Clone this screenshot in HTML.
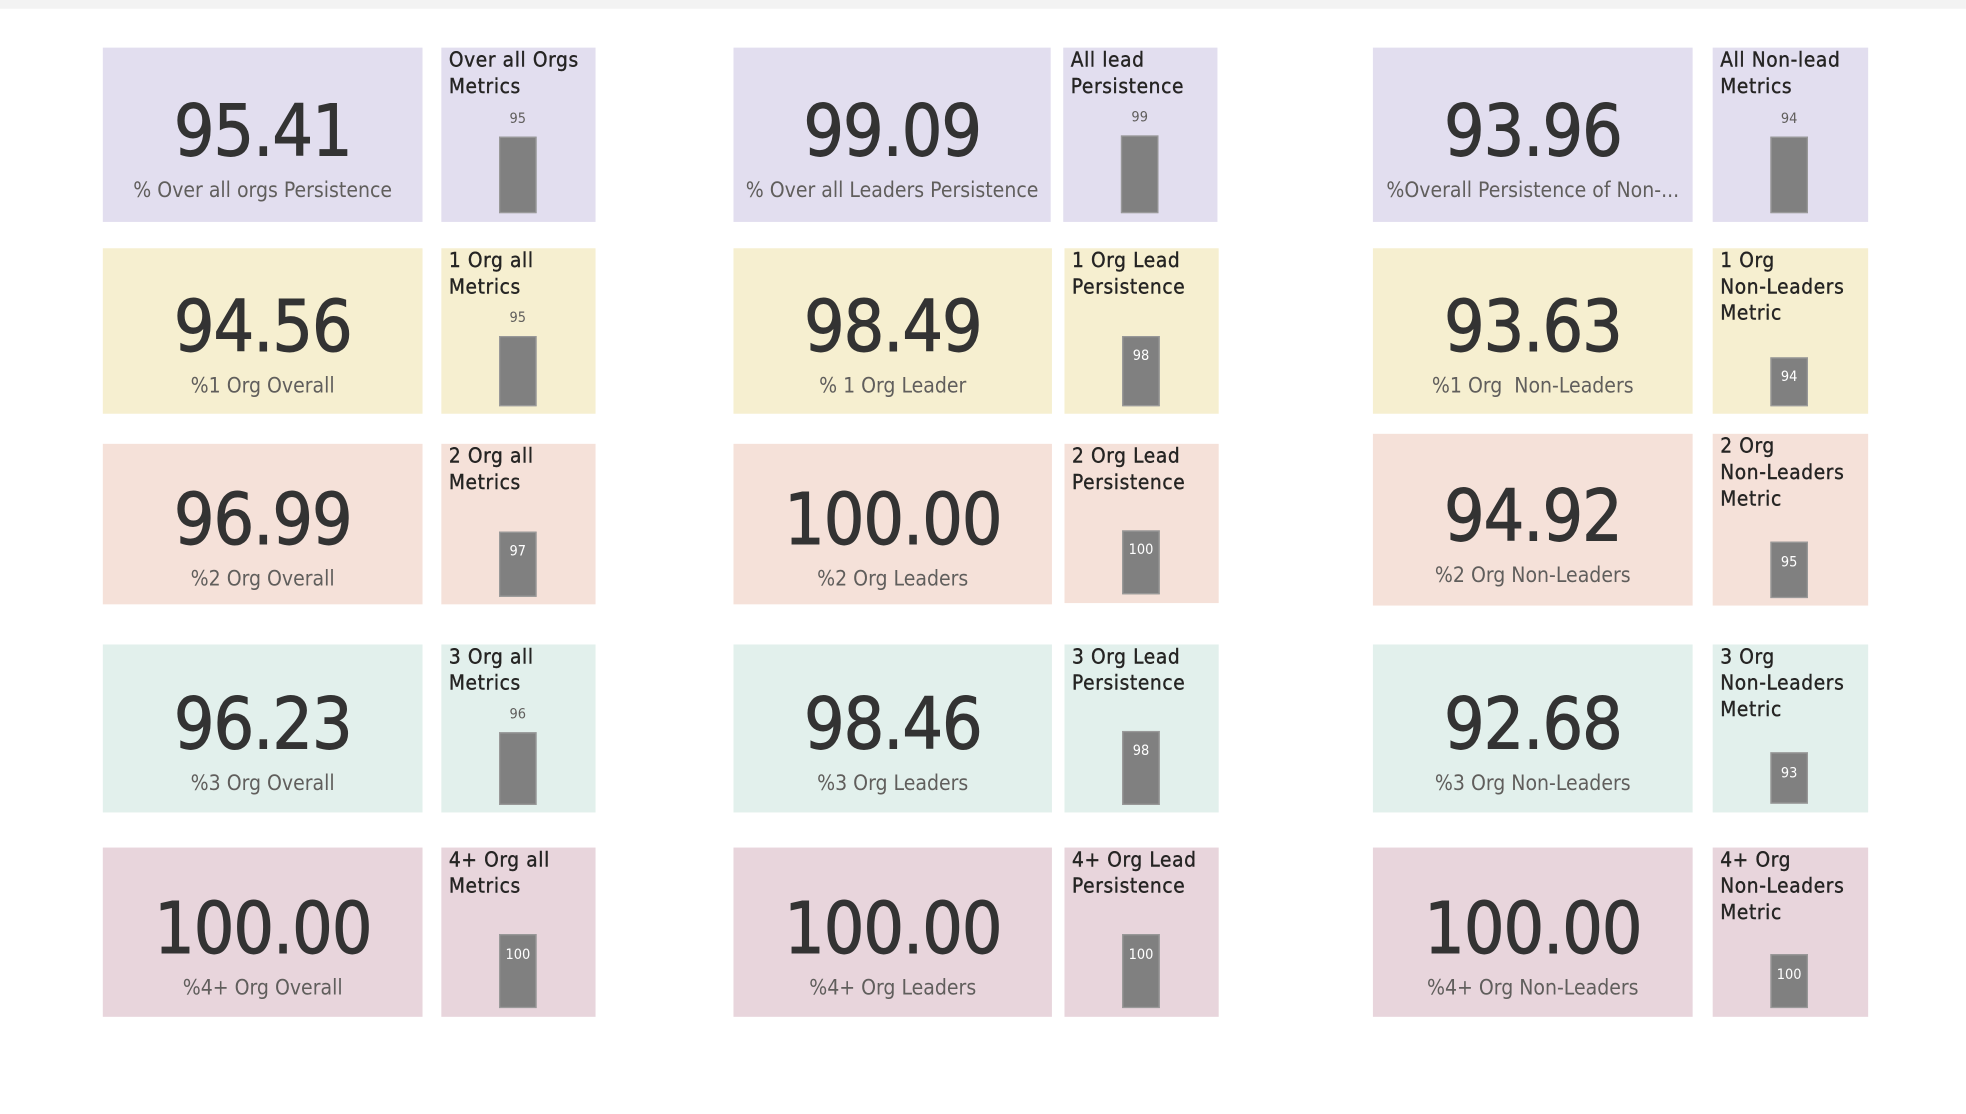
<!DOCTYPE html>
<html><head><meta charset="utf-8"><style>
html,body{margin:0;padding:0;background:#fff;overflow:hidden}
body{width:1966px;height:1114px;position:relative}
#w{position:absolute;left:0;top:0;width:1568px;height:889px;transform:scale(1.2538);transform-origin:0 0}
.top{position:absolute;left:0;top:0;width:1568px;height:7px;background:#f3f3f3}
.b,.m{position:absolute}
.n{position:absolute;left:0;right:0;top:calc(50% - 38px);height:70px;line-height:70px;text-align:center;font-family:"DejaVu Sans Condensed","DejaVu Sans",sans-serif;font-stretch:condensed;font-size:57px;color:#333;letter-spacing:-1px;-webkit-text-stroke:0.7px #333}
.l{position:absolute;left:0;right:0;top:calc(50% + 31px);height:24px;line-height:24px;text-align:center;font-family:"DejaVu Sans Condensed","DejaVu Sans",sans-serif;font-stretch:condensed;font-size:16.8px;color:#605e5c;white-space:nowrap}
.t{position:absolute;left:6px;top:-1px;font-family:"DejaVu Sans Condensed","DejaVu Sans",sans-serif;font-stretch:condensed;font-size:16.5px;line-height:21px;color:#252423;white-space:nowrap;letter-spacing:0.5px;-webkit-text-stroke:0.3px #252423}
.bar{position:absolute;width:30px;background:#808080;border:1px solid #999;box-sizing:border-box}
.bl{position:absolute;width:30px;text-align:center;font-family:"DejaVu Sans Condensed","DejaVu Sans",sans-serif;font-size:11.5px;color:#605e5c;line-height:14px}
.in{color:#fff}
.p{background:#e2deef}.y{background:#f6efd0}.k{background:#f5e1d9}.g{background:#e2f0ec}.r{background:#e8d5dc}
</style></head><body><div id="w">
<div class="top"></div>

<div class="b p" style="left:82px;top:38px;width:255px;height:139px"><div class="n">95.41</div><div class="l">% Over all orgs Persistence</div></div>
<div class="m p" style="left:352px;top:38px;width:123px;height:139px"><div class="t">Over all Orgs<br>Metrics</div></div>
<div class="b p" style="left:585px;top:38px;width:253px;height:139px"><div class="n">99.09</div><div class="l">% Over all Leaders Persistence</div></div>
<div class="m p" style="left:848px;top:38px;width:123px;height:139px"><div class="t">All lead<br>Persistence</div></div>
<div class="b p" style="left:1095px;top:38px;width:255px;height:139px"><div class="n">93.96</div><div class="l">%Overall Persistence of Non-...</div></div>
<div class="m p" style="left:1366px;top:38px;width:124px;height:139px"><div class="t">All Non-lead<br>Metrics</div></div>

<div class="b y" style="left:82px;top:198px;width:255px;height:132px"><div class="n">94.56</div><div class="l">%1 Org Overall</div></div>
<div class="m y" style="left:352px;top:198px;width:123px;height:132px"><div class="t">1 Org all<br>Metrics</div></div>
<div class="b y" style="left:585px;top:198px;width:254px;height:132px"><div class="n">98.49</div><div class="l">% 1 Org Leader</div></div>
<div class="m y" style="left:849px;top:198px;width:123px;height:132px"><div class="t">1 Org Lead<br>Persistence</div></div>
<div class="b y" style="left:1095px;top:198px;width:255px;height:132px"><div class="n">93.63</div><div class="l">%1 Org &nbsp;Non-Leaders</div></div>
<div class="m y" style="left:1366px;top:198px;width:124px;height:132px"><div class="t">1 Org<br>Non-Leaders<br>Metric</div></div>

<div class="b k" style="left:82px;top:354px;width:255px;height:128px"><div class="n">96.99</div><div class="l">%2 Org Overall</div></div>
<div class="m k" style="left:352px;top:354px;width:123px;height:128px"><div class="t">2 Org all<br>Metrics</div></div>
<div class="b k" style="left:585px;top:354px;width:254px;height:128px"><div class="n">100.00</div><div class="l">%2 Org Leaders</div></div>
<div class="m k" style="left:849px;top:354px;width:123px;height:127px"><div class="t">2 Org Lead<br>Persistence</div></div>
<div class="b k" style="left:1095px;top:346px;width:255px;height:137px"><div class="n">94.92</div><div class="l">%2 Org Non-Leaders</div></div>
<div class="m k" style="left:1366px;top:346px;width:124px;height:137px"><div class="t">2 Org<br>Non-Leaders<br>Metric</div></div>

<div class="b g" style="left:82px;top:514px;width:255px;height:134px"><div class="n">96.23</div><div class="l">%3 Org Overall</div></div>
<div class="m g" style="left:352px;top:514px;width:123px;height:134px"><div class="t">3 Org all<br>Metrics</div></div>
<div class="b g" style="left:585px;top:514px;width:254px;height:134px"><div class="n">98.46</div><div class="l">%3 Org Leaders</div></div>
<div class="m g" style="left:849px;top:514px;width:123px;height:134px"><div class="t">3 Org Lead<br>Persistence</div></div>
<div class="b g" style="left:1095px;top:514px;width:255px;height:134px"><div class="n">92.68</div><div class="l">%3 Org Non-Leaders</div></div>
<div class="m g" style="left:1366px;top:514px;width:124px;height:134px"><div class="t">3 Org<br>Non-Leaders<br>Metric</div></div>

<div class="b r" style="left:82px;top:676px;width:255px;height:135px"><div class="n">100.00</div><div class="l">%4+ Org Overall</div></div>
<div class="m r" style="left:352px;top:676px;width:123px;height:135px"><div class="t">4+ Org all<br>Metrics</div></div>
<div class="b r" style="left:585px;top:676px;width:254px;height:135px"><div class="n">100.00</div><div class="l">%4+ Org Leaders</div></div>
<div class="m r" style="left:849px;top:676px;width:123px;height:135px"><div class="t">4+ Org Lead<br>Persistence</div></div>
<div class="b r" style="left:1095px;top:676px;width:255px;height:135px"><div class="n">100.00</div><div class="l">%4+ Org Non-Leaders</div></div>
<div class="m r" style="left:1366px;top:676px;width:124px;height:135px"><div class="t">4+ Org<br>Non-Leaders<br>Metric</div></div>

<div class="bar" style="left:398px;top:109px;height:61px"></div><div class="bl" style="left:398px;top:87px">95</div>
<div class="bar" style="left:398px;top:268px;height:56px"></div><div class="bl" style="left:398px;top:246px">95</div>
<div class="bar" style="left:398px;top:424px;height:52px"></div><div class="bl in" style="left:398px;top:432px">97</div>
<div class="bar" style="left:398px;top:584px;height:58px"></div><div class="bl" style="left:398px;top:562px">96</div>
<div class="bar" style="left:398px;top:745px;height:59px"></div><div class="bl in" style="left:398px;top:754px">100</div>
<div class="bar" style="left:894px;top:108px;height:62px"></div><div class="bl" style="left:894px;top:86px">99</div>
<div class="bar" style="left:895px;top:268px;height:56px"></div><div class="bl in" style="left:895px;top:276px">98</div>
<div class="bar" style="left:895px;top:423px;height:51px"></div><div class="bl in" style="left:895px;top:431px">100</div>
<div class="bar" style="left:895px;top:583px;height:59px"></div><div class="bl in" style="left:895px;top:591px">98</div>
<div class="bar" style="left:895px;top:745px;height:59px"></div><div class="bl in" style="left:895px;top:754px">100</div>
<div class="bar" style="left:1412px;top:109px;height:61px"></div><div class="bl" style="left:1412px;top:87px">94</div>
<div class="bar" style="left:1412px;top:285px;height:39px"></div><div class="bl in" style="left:1412px;top:293px">94</div>
<div class="bar" style="left:1412px;top:432px;height:45px"></div><div class="bl in" style="left:1412px;top:441px">95</div>
<div class="bar" style="left:1412px;top:600px;height:41px"></div><div class="bl in" style="left:1412px;top:609px">93</div>
<div class="bar" style="left:1412px;top:761px;height:43px"></div><div class="bl in" style="left:1412px;top:770px">100</div>
</div></body></html>
